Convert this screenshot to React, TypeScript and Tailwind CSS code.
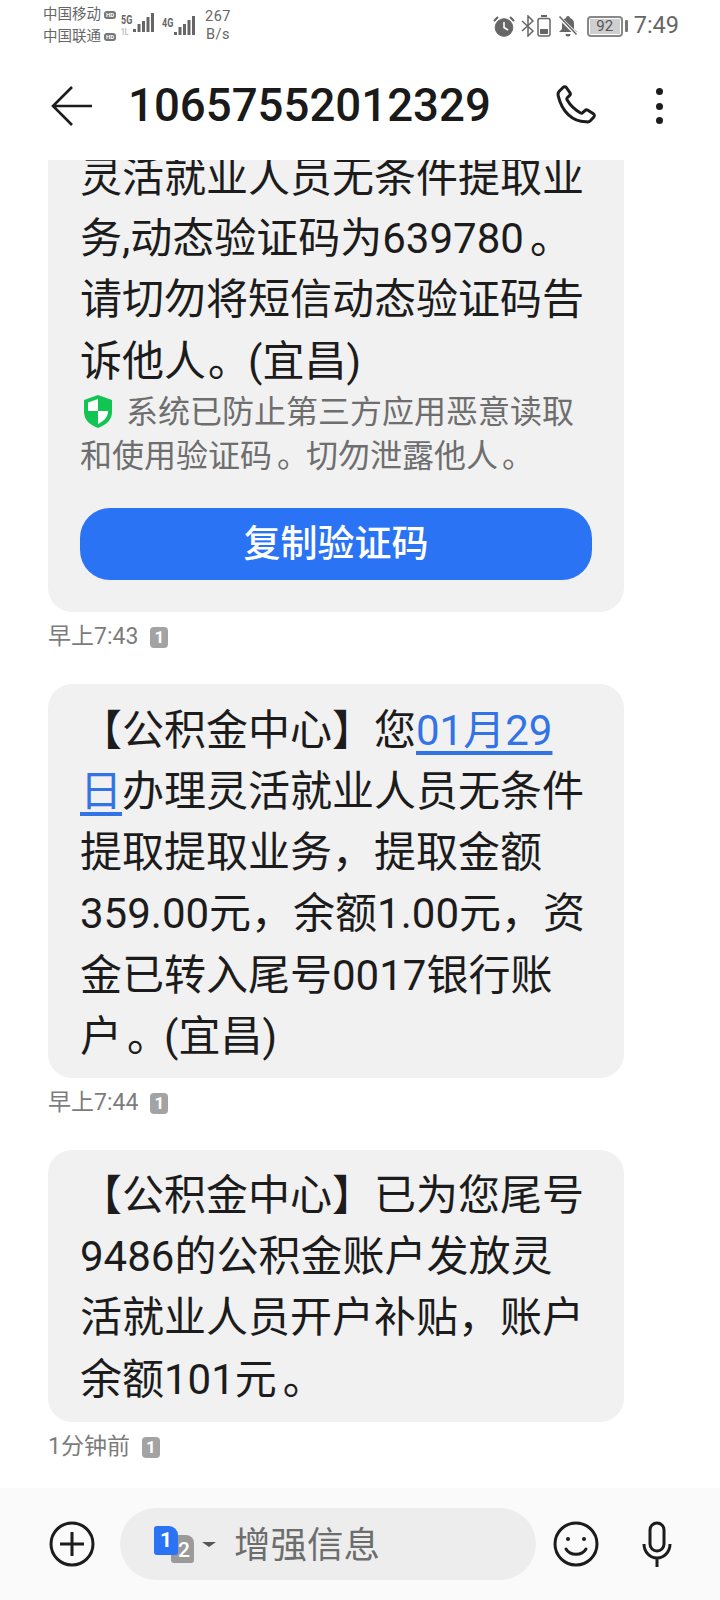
import type { ReactNode } from 'react';

const fontStack = 'font-[Roboto,"Noto_Sans_CJK_SC",sans-serif]';

// the reference's full stop sits further right in its cell than the font's does
function Dot({ className }: { className: string }) {
  return <span className={`inline-block ${className}`}>。</span>;
}

function SimBadge({ n }: { n: string }) {
  return (
    <span className="inline-flex h-[21px] w-[18px] items-center justify-center rounded-[4px] bg-[#a3a3a3] text-[17px] font-bold leading-none text-white">
      {n}
    </span>
  );
}

function Time({ label, n }: { label: string; n: string }) {
  return (
    <div className="ml-[48px] flex h-[48px] items-center gap-[12px] pt-[3px] text-[23px] text-[#7c7c7c]">
      <span>{label}</span>
      <SimBadge n={n} />
    </div>
  );
}

function Bubble({ children, className }: { children: ReactNode; className?: string }) {
  return (
    <div className={`ml-[48px] w-[576px] rounded-[24px] bg-[#f1f1f1] pl-[32px] text-[42px] leading-[61.2px] text-[#1c1c1c] ${className ?? ''}`}>
      {children}
    </div>
  );
}

function Bars() {
  return (
    <svg width="21" height="20" viewBox="0 0 21 20" fill="#666" className="block">
      <rect x="0" y="16" width="3" height="3" />
      <rect x="4.500" y="11" width="3" height="8" />
      <rect x="9" y="8" width="3" height="11" />
      <rect x="13.500" y="4" width="3" height="15" />
      <rect x="18" y="0" width="3" height="19" />
    </svg>
  );
}

function HdBadge() {
  return (
    <span className="ml-[3px] inline-flex h-[8px] w-[12px] items-center justify-center rounded-[3px] bg-[#777] text-[6px] font-bold leading-none text-white">
      HD
    </span>
  );
}

function StatusBar() {
  return (
    <div className="flex h-[52px] items-center pl-[43px] pr-[41px] text-[#666]">
      <div className="flex w-[78px] flex-col text-[14.5px] leading-[22px]">
        <div className="flex items-center">中国移动<HdBadge /></div>
        <div className="flex items-center">中国联通<HdBadge /></div>
      </div>
      <div className="flex w-[41px] items-start">
        <div className="flex w-[12px] flex-col text-[12px] font-bold leading-[12px]">
          <span className="origin-left scale-x-75">5G</span>
          <span className="origin-left scale-x-75 text-[9px] text-[#bbb]">1L</span>
        </div>
        <div className="-mt-[1px]">
          <Bars />
        </div>
      </div>
      <div className="flex w-[42px] items-start">
        <span className="w-[12px] origin-left scale-x-75 text-[12px] font-bold leading-[12px]">4G</span>
        <div className="-mt-[1px]">
          <Bars />
        </div>
      </div>
      <div className="flex w-[28px] flex-col items-center text-[14.5px] leading-[18px] tracking-[0.5px]">
        <span>267</span>
        <span>B/s</span>
      </div>
      <div className="ml-auto flex items-center">
        <svg width="22" height="22" viewBox="0 0 22 22" fill="none" stroke="#666" className="block">
          <circle cx="11" cy="12.500" r="8.800" fill="#666" />
          <path d="M11 7v5.500l4 2.500" stroke="#fff" strokeWidth="1.600" />
          <path d="M1 6 5 2M21 6l-4-4" strokeWidth="2.200" />
        </svg>
        <svg width="14" height="22" viewBox="0 0 14 22" fill="none" stroke="#666" strokeWidth="1.500" className="ml-[6px] block">
          <path d="M1 6l11 10-5 5V1l5 5L1 16" />
        </svg>
        <svg width="14" height="22" viewBox="0 0 14 22" className="ml-[2px] block">
          <rect x="4" y="0" width="6" height="2" fill="#666" />
          <rect x="1" y="3.500" width="12" height="17.500" rx="2" fill="none" stroke="#666" strokeWidth="1.500" />
          <rect x="3" y="14" width="8" height="5" fill="#666" />
        </svg>
        <svg width="20" height="22" viewBox="0 0 20 22" fill="#666" className="ml-[7px] block">
          <path d="M10 1a2 2 0 0 1 2 2c3 1 4 3 4 6v5l3 3H1l3-3V9c0-3 1-5 4-6a2 2 0 0 1 2-2z" />
          <path d="M7.500 19h5a2.500 2.500 0 0 1-5 0z" />
          <path d="M1 2l18 18" stroke="#fff" strokeWidth="3.500" />
          <path d="M1.500 1.500l17 18" stroke="#666" strokeWidth="1.500" />
        </svg>
        <div className="ml-[9px] flex h-[21px] w-[36px] rounded-[4px] border-2 border-[#888] p-[1px]">
          <div className="flex flex-1 items-center justify-center bg-[#cfcfcf] text-[15px] leading-none text-[#555]">92</div>
        </div>
        <div className="ml-[2px] h-[12px] w-[3px] rounded-[1px] bg-[#777]" />
        <span className="ml-[6px] text-[23.5px] leading-none">7:49</span>
      </div>
    </div>
  );
}

function Header() {
  return (
    <div className="relative z-10 flex h-[108px] items-center bg-white pl-[51px]">
      <svg width="42" height="42" viewBox="0 0 42 42" fill="none" stroke="#1c1c1c" strokeWidth="2.600" className="block">
        <path d="M41 21H2M21 2 2 21l19 19" />
      </svg>
      <span className="ml-[35px] w-[365px] text-[45.600px] font-medium leading-none text-[#1a1a1a]">10657552012329</span>
      <svg width="42" height="42" viewBox="0 0 42 42" fill="none" stroke="#1c1c1c" strokeWidth="3" strokeLinejoin="round" className="ml-[63px] block">
        <path d="M3 6.500 7 2.500c1-1 2.500-1 3.300 0l3.600 5.200c.7 1 .5 2.200-.4 3l-2.200 2c-.6.6-.7 1.400-.3 2.100 3.200 5.500 7.800 10 13.600 13.200.7.4 1.500.3 2.100-.3l2.200-2.100c.9-.8 2.100-.9 3-.3l5.500 3.500c1.200.8 1.300 2.400.3 3.400l-3.400 3.600c-1 1-2.400 1.300-3.800.9C16.500 37 6 27 2.100 10.300c-.3-1.400.1-2.800.9-3.800z" />
      </svg>
      <div className="ml-[58px] flex flex-col gap-[7.500px]">
        <span className="h-[7px] w-[7px] rounded-full bg-[#1c1c1c]" />
        <span className="h-[7px] w-[7px] rounded-full bg-[#1c1c1c]" />
        <span className="h-[7px] w-[7px] rounded-full bg-[#1c1c1c]" />
      </div>
    </div>
  );
}

function Shield() {
  return (
    <svg width="28" height="33" viewBox="0 0 28 33" className="ml-[4px] block">
      <path d="M14 0 28 5v12c0 8-6 13-14 16C6 30 0 25 0 17V5z" fill="#12c552" />
      <path d="M14 4v12H4V7.500zM14 16h10c0 6-4 10-10 13z" fill="#fff" />
    </svg>
  );
}

function Footer() {
  return (
    <div className="flex h-[112px] items-center bg-[#fafafa]">
      <svg width="46" height="46" viewBox="0 0 46 46" fill="none" stroke="#1c1c1c" strokeWidth="3" className="ml-[49px] block">
        <circle cx="23" cy="23" r="21" />
        <path d="M23 11v24M11 23h24" />
      </svg>
      <div className="ml-[25px] flex h-[72px] w-[416px] items-center rounded-full bg-[#ededed] pl-[34px]">
        <div className="relative h-[37px] w-[40px]">
          <div className="relative z-10 flex h-[29px] w-[24px] items-center justify-center rounded-[3px] rounded-tr-[9px] bg-[#2a73f5] text-[21px] font-bold leading-none text-white">
            1
          </div>
          <div className="absolute left-[17px] top-[9px] flex h-[28px] w-[23px] items-center justify-center rounded-[3px] rounded-tr-[8px] bg-[#9a9a9a] pl-[3px] pt-[3px] text-[21px] font-medium leading-none text-white">
            2
          </div>
        </div>
        <div className="ml-[8px] h-0 w-0 border-x-[7px] border-t-[5px] border-x-transparent border-t-[#555]" />
        <span className="ml-[18px] mt-[5px] text-[36.500px] leading-none text-[#6d6d6d]">增强信息</span>
      </div>
      <svg width="46" height="46" viewBox="0 0 46 46" fill="none" stroke="#1c1c1c" strokeWidth="3" strokeLinecap="round" className="ml-[17px] block">
        <circle cx="23" cy="23" r="21" />
        <circle cx="15" cy="18" r="2" fill="#1c1c1c" stroke="none" />
        <circle cx="31" cy="18" r="2" fill="#1c1c1c" stroke="none" />
        <path d="M13 28c4 7 16 7 20 0" />
      </svg>
      <svg width="30" height="46" viewBox="0 0 30 46" fill="none" stroke="#1c1c1c" strokeWidth="3" className="ml-[43px] block">
        <rect x="8" y="2" width="14" height="28" rx="7" />
        <path d="M2 23c0 8 6 14 13 14s13-6 13-14M15 37v9" />
      </svg>
    </div>
  );
}

export default function App() {
  return (
    <div className={`flex h-[1600px] w-[720px] flex-col overflow-hidden bg-white ${fontStack}`}>
      <StatusBar />
      <Header />
      <div className="flex-1 overflow-hidden">
        <Bubble className="-mt-[13px] rounded-t-none pb-[32px] pt-0">
          灵活就业人员无条件提取业<br />
          务,动态验证码为639780<Dot className="translate-x-[6px]" /><br />
          请切勿将短信动态验证码告<br />
          诉他人<Dot className="translate-x-[2px]" />(宜昌)
          <div className="-mt-[3px] text-[32px] leading-[46px] text-[#6e6e6e]">
            <div className="flex h-[46px] items-center">
              <Shield />
              <span className="ml-[14px]">系统已防止第三方应用恶意读取</span>
            </div>
            <div className="-mt-[2px] h-[46px]">
              和使用验证码<Dot className="mr-[2px] translate-x-[5px]" />切勿泄露他人<Dot className="translate-x-[4px]" />
            </div>
          </div>
          <div className="mt-[29px] flex h-[72px] w-[512px] items-center justify-center rounded-[30px] bg-[#2a73f5] pt-[2px] text-[37px] font-medium leading-none text-white">
            复制验证码
          </div>
        </Bubble>
        <Time label="早上7:43" n="1" />
        <Bubble className="mt-[24px] pb-[11px] pt-[16px]">
          【公积金中心】您<span className="text-[#3273e6] underline underline-offset-[6px]">01月29<br />日</span>办理灵活就业人员无条件<br />
          提取提取业务，提取金额<br />
          359.00元，余额1.00元，资<br />
          金已转入尾号0017银行账<br />
          户<Dot className="translate-x-[5px]" />(宜昌)
        </Bubble>
        <Time label="早上7:44" n="1" />
        <Bubble className="mt-[24px] pb-[12px] pt-[15px]">
          【公积金中心】已为您尾号<br />
          9486的公积金账户发放灵<br />
          活就业人员开户补贴，账户<br />
          余额101元<Dot className="translate-x-[6px]" />
        </Bubble>
        <Time label="1分钟前" n="1" />
      </div>
      <Footer />
    </div>
  );
}
